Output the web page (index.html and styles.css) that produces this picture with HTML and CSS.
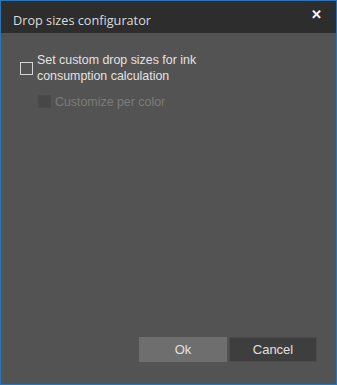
FILE: index.html
```html
<!DOCTYPE html>
<html lang="en">
<head>
    <meta charset="UTF-8">
    <title>Drop sizes configurator</title>
    <link rel="stylesheet" href="styles.css">
</head>
<body>
    <div class="dialog">
        <div class="titlebar">
            <span class="title">Drop sizes configurator</span>
            <button class="close-button">&#10005;</button>
        </div>

        <div class="content">
            <label class="option">
                <span class="box"></span>
                <span class="text">Set custom drop sizes for ink consumption calculation</span>
            </label>
            <label class="option sub disabled">
                <span class="box"></span>
                <span class="text">Customize per color</span>
            </label>
        </div>

        <div class="footer">
            <button class="btn ok">Ok</button>
            <button class="btn cancel">Cancel</button>
        </div>
    </div>
</body>
</html>
```

FILE: styles.css
```css
body {
    margin: 0;
    width: 337px;
    height: 385px;
    font-family: "Liberation Sans", Arial, sans-serif;
    background-color: #535353;
}

.dialog {
    box-sizing: border-box;
    width: 337px;
    height: 385px;
    border: 1px solid #2a74b8;
    background-color: #535353;
    display: flex;
    flex-direction: column;
}

.titlebar {
    height: 32px;
    background-color: #2d2d2d;
    display: flex;
    align-items: center;
    justify-content: space-between;
    padding: 0 14px 0 12px;
}

.title {
    font-family: "Open Sans", sans-serif;
    font-size: 12.7px;
    color: #dcdcdc;
    margin-top: 6px;
}

.close-button {
    background: none;
    border: none;
    color: #ffffff;
    font-size: 13px;
    font-weight: bold;
    padding: 0;
    margin-top: -6px;
    cursor: pointer;
}

.content {
    flex-grow: 1;
    padding: 19px 20px 0 19px;
}

.option {
    display: flex;
    align-items: flex-start;
    font-size: 12.4px;
    line-height: 16px;
    color: #e2e2e2;
    width: 200px;
}

.option .box {
    flex-shrink: 0;
    width: 11px;
    height: 11px;
    border: 1px solid #d6d6d6;
    margin: 10px 4px 0 0;
}

.option.sub {
    margin: 10px 0 0 18px;
}

.option.disabled {
    color: #7b7b7b;
}

.option.disabled .box {
    background-color: #474747;
    border-color: #4a4a4a;
    margin-top: 1px;
}

.footer {
    display: flex;
    justify-content: flex-end;
    gap: 2px;
    padding: 0 19px 22px 0;
}

.btn {
    width: 88px;
    height: 25px;
    font-family: "Liberation Sans", Arial, sans-serif;
    font-size: 13px;
    color: #e0e0e0;
    border: 1px solid transparent;
    cursor: pointer;
}

.btn.ok {
    background-color: #6e6e6e;
    border-color: #6e6e6e;
}

.btn.cancel {
    background-color: #3e3e3e;
    border-color: #4c4c4c;
}
```
